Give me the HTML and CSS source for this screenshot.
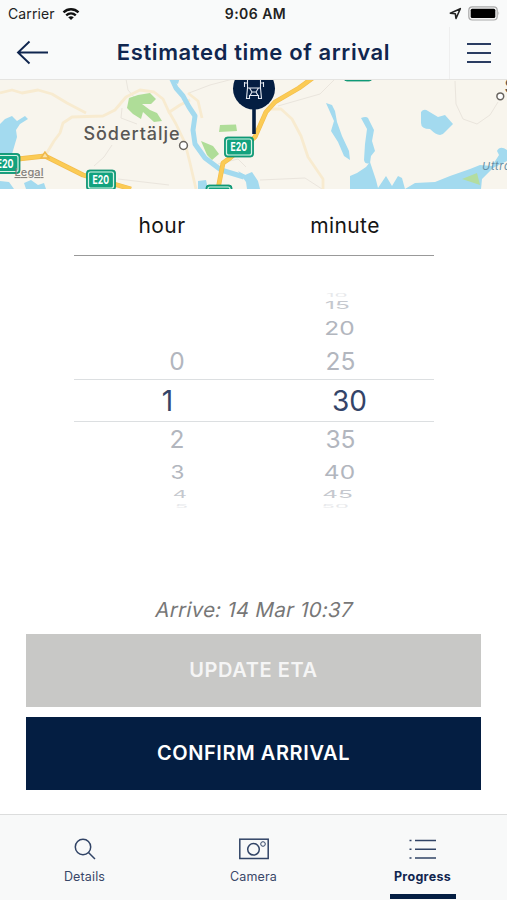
FILE: index.html
```html
<!DOCTYPE html>
<html lang="en">
<head>
<meta charset="utf-8">
<title>Estimated time of arrival</title>
<link rel="stylesheet" href="styles.css">
</head>
<body>
<div class="app">
  <header class="top">
    <div class="status">
      <div class="status-left">
        <span class="carrier">Carrier</span>
        <svg class="wifi" width="18" height="14" viewBox="0 0 18 14">
          <g fill="none" stroke="#111" stroke-width="2.4"><path d="M1.5 5.3C5.8 1.2 12.2 1.2 16.5 5.3"/><path d="M4.2 8.3C7 5.8 11 5.8 13.8 8.3"/></g>
          <path d="M9 13L6.2 10.2Q9 8.2 11.800 10.200Z" fill="#111"/>
        </svg>
      </div>
      <span class="clock">9:06 AM</span>
      <div class="status-right">
        <svg width="13" height="13" viewBox="0 0 13 13"><path d="M1.300 6.200L11.300 1.700L7 11.500L6.300 6.700Z" fill="none" stroke="#222" stroke-width="1.600" stroke-linejoin="round"/></svg>
        <svg width="33" height="15" viewBox="0 0 33 15"><rect x=".8" y=".8" width="28.400" height="13.200" rx="3.500" fill="#f4f4f4" stroke="#aaa" stroke-width="1.200"/><rect x="2.700" y="2.700" width="24.600" height="9.400" rx="1.500"/><path d="M30.500 5.200Q32.300 7.400 30.500 9.600Z" fill="#aaa"/></svg>
      </div>
    </div>
    <div class="nav">
      <div class="back"><svg width="34" height="26" viewBox="0 0 34 26"><path d="M33 12.500H3M14.500 1.500L3 12.500L14.500 23.500" fill="none" stroke="#10264f" stroke-width="1.900"/></svg></div>
      <h1>Estimated time of arrival</h1>
      <div class="menu"><i></i><i></i><i></i></div>
    </div>
  </header>

  <svg class="map" width="507" height="110" viewBox="0 0 507 110">
    <rect width="507" height="110" fill="#f8f5ed"/>
    <g fill="none" stroke="#eae5dd" stroke-width="1">
      <path d="M126 0L128 11L134 18M122 29L121 39L137 45M112 66L104 78L94 87M455 2L456 25L463 40L477 45L490 36L498 23"/>
      <path d="M118 100L169 106M189 14L210 6L233 0M260 101L305 99L322 110M218 85L238 80L246 88M278 27L320 15L335 0"/>
    </g>
    <g fill="none" stroke="#f8ebd0" stroke-width="2.800" stroke-linejoin="round">
      <path d="M0 14L12 11L22 14L38 11L52 15L67 24L86 34"/>
      <path d="M45 77L54 62L60 54L63 44L72 38L103 37L115 31L126 18L140 11L154 13L163 20L168 31L176 45L185 64L190 84L196 110"/>
      <path d="M168 34L180 26L190 21M188 14L198 22L202 39M266 30L281 30L292 40L301 57L308 78L323 100V110"/>
    </g>
    <g fill="#afdd98">
      <path d="M129 19L138 16L150 14L156 20L151 25L142 25L150 31L157 34L162 42L154 43L143 33L141 40L133 35L127 29Z"/>
      <path d="M220 46L236 45.500L237 52L219 53ZM201 62L213 67L219 75L212 81L207 76Z"/>
    </g>
    <g fill="#a3daef">
      <path d="M0 45L5 40L12 37L17 42L25 37L28 40L20 45L16 51L17 58L12 75L10 81H0Z"/>
      <path d="M0 102L9 103L14 110H0ZM24 104L31 101L38 106L44 104L46 110H26Z"/>
      <path d="M326 24L332 26L335 32L337 43L342 57L349 72L350 81L344 77L338 63L331 52L334 42Z"/>
      <path d="M361 39Q366 37 368 39L374 51L372 62L375 72L371 77L370 84Q365 86 364 81L365 65L367 50Z"/>
      <path d="M421 33Q424 29 428 32L438 38L445 36L453 45L445 53Q440 60 430 50Q421 50 421 44Z"/>
      <path d="M350 110L350 97L357 94L366 88L370 83L373 92L376 101L378 109L386 97L392 107L398 97L402 99L405 110L415 104L435 103L450 97L470 90L480 86L492 87L499 76L497 72Q500 66 507 71V82L493 89L482 100L481 110Z"/>
      <path d="M238 92L245 96L252 93L258 102L260 110H247L246 103Z"/>
      <path d="M198 102L206 101L208 110H198Z"/>
    </g>
    <path d="M171 -2L176 9L183 17L189 28L195 37L193 51L195 65L205 79L221 91L244 98" fill="none" stroke="#a3daef" stroke-width="5" stroke-linejoin="round"/>
    <path d="M163 -2H180L178 5Z" fill="#a3daef"/>
    <path d="M462 100L477 94L480 106Z" fill="#b3dda0"/>
    <g fill="none" stroke-linejoin="round">
      <g stroke="#f3bd4c" stroke-width="4.800"><path d="M18 80L45 77L83 96L131 110"/><path d="M314 -2L299 9L275 23L266 33L255 58L230 79L223 84L218 110"/></g>
      <g stroke="#fbcb55" stroke-width="3.500"><path d="M18 80L45 77L83 96L131 110"/><path d="M314 -2L299 9L275 23L266 33L255 58L230 79L223 84L218 110"/></g>
    </g>
    <path d="M45 73L41 79L49 79Z" fill="#fbe3a8" stroke="#efb84a" stroke-width="1.500"/>
    <g fill="#12a27e" stroke="#0b8d6c" stroke-width=".8">
      <rect x="-9" y="74.500" width="29" height="20" rx="3"/><rect x="86.500" y="91" width="29" height="20" rx="3"/><rect x="224.500" y="58" width="29" height="20" rx="3"/><rect x="206" y="106" width="26" height="18" rx="3"/><rect x="344" y="-16" width="28" height="18" rx="3"/>
    </g>
    <g fill="none" stroke="#d9f3e5" stroke-width="1.200">
      <rect x="-7" y="76.500" width="25" height="16" rx="2"/><rect x="88.500" y="93" width="25" height="16" rx="2"/><rect x="226.500" y="60" width="25" height="16" rx="2"/><rect x="208" y="108" width="22" height="14" rx="2"/><rect x="346" y="-16" width="24" height="16" rx="2"/>
    </g>
    <g class="shield"><text x="-3.500" y="88.500" textLength="17" lengthAdjust="spacingAndGlyphs">E20</text><text x="92.500" y="105" textLength="16.500" lengthAdjust="spacingAndGlyphs">E20</text><text x="230.500" y="72" textLength="16.500" lengthAdjust="spacingAndGlyphs">E20</text></g>
    <text class="legal" x="14.500" y="97" textLength="29">Legal</text>
    <text class="city" x="83.500" y="61" textLength="96">Södertälje</text>
    <text class="city" x="504.500" y="14">S</text>
    <text class="water" x="482" y="91">Uttran</text>
    <g fill="#fff" stroke="#68645f" stroke-width="1.500"><circle cx="183.500" cy="66.500" r="3.900"/><circle cx="500.300" cy="17.300" r="3.400"/></g>
    <path d="M254 25V55" stroke="#041e42" stroke-width="3.600"/>
    <circle cx="254" cy="9.500" r="21" fill="#041e42"/>
    <g fill="none" stroke="#e4e9f1" stroke-width="1.100"><path d="M247.500 -2V9H260.500V-2M244.500 3V8M263.500 3V8M244.500 4H247.500M260.500 4H263.500M247.500 9L246.500 19.500H249.500V16.500H258.500V19.500H261.500L260.500 9M249.500 9L252 13H256L258.500 9M250 16.500L252 13M258 16.500L256 13"/></g>
    <path d="M0 .5H507" stroke="#e5e4e1"/>
  </svg>

  <main class="main">
    <div class="labels"><span class="hour-label">hour</span><span class="minute-label">minute</span></div>
    <div class="picker">
      <div class="col hours">
        <div class="row r10"></div><div class="row r15"></div><div class="row r20"></div>
        <div class="row near"><span>0</span></div>
        <div class="row sel"><span>1</span></div>
        <div class="row near"><span>2</span></div>
        <div class="row r40"><span>3</span></div>
        <div class="row r45"><span>4</span></div>
        <div class="row r50"><span>5</span></div>
      </div>
      <div class="col minutes">
        <div class="row r10"><span>10</span></div>
        <div class="row r15"><span>15</span></div>
        <div class="row r20"><span>20</span></div>
        <div class="row near"><span>25</span></div>
        <div class="row sel"><span>30</span></div>
        <div class="row near"><span>35</span></div>
        <div class="row r40"><span>40</span></div>
        <div class="row r45"><span>45</span></div>
        <div class="row r50"><span>50</span></div>
      </div>
    </div>
    <p class="arrive">Arrive: 14 Mar 10:37</p>
    <button class="btn update">UPDATE ETA</button>
    <button class="btn confirm">CONFIRM ARRIVAL</button>
  </main>

  <nav class="tabs">
    <div class="tab">
      <svg width="30" height="24" viewBox="0 0 30 24"><circle cx="13" cy="10" r="7.700"/><path d="M18.500 15.500L25 22"/></svg>
      <span class="t-details">Details</span>
    </div>
    <div class="tab">
      <svg width="30" height="24" viewBox="0 0 30 24"><rect x=".8" y="2.200" width="28.400" height="19.300"/><circle cx="14.500" cy="12.300" r="5.800"/><circle cx="24" cy="7" r="2.300" stroke-width="1"/></svg>
      <span class="t-camera">Camera</span>
    </div>
    <div class="tab active">
      <svg width="30" height="24" viewBox="0 0 30 24"><path d="M7 3.500H28M7 12.300H28M7 21H28M1.500 3.500H3.500M1.500 12.300H3.500M1.500 21H3.500"/></svg>
      <span class="t-progress">Progress</span>
    </div>
  </nav>
</div>
</body>
</html>
```
FILE: styles.css
```css
* { box-sizing: border-box; }
body { margin: 0; background: #fff; font-family: Inter, "Liberation Sans", sans-serif; color: #10264f; }
.app { width: 507px; height: 900px; display: flex; flex-direction: column; overflow: hidden; }
.top { height: 79px; background: #f9fafa; flex: none; }
.status { height: 27px; display: grid; grid-template-columns: 1fr auto 1fr; align-items: center; padding: 0 6px 0 8px; font-size: 13px; color: #222; }
.status-left { display: flex; align-items: center; gap: 7px; }
.carrier { font-size: 14px; letter-spacing: .1px; }
.clock { font-size: 14px; font-weight: 600; letter-spacing: .45px; transform: translateX(1px); }
.status-right { display: flex; justify-content: flex-end; align-items: center; gap: 6px; }
.nav { height: 52px; display: grid; grid-template-columns: 58px 1fr 58px; align-items: center; }
.back { padding-left: 15px; height: 26px; }
h1 { margin: 0; font-size: 22px; font-weight: 600; text-align: center; letter-spacing: .62px; white-space: nowrap; line-height: 50px; height: 52px; }
.menu { height: 52px; border-left: 1px solid #efefef; display: flex; flex-direction: column; justify-content: center; gap: 7px; padding-left: 17px; }
.menu i { width: 24px; height: 2px; background: #2b3d62; }
.map { display: block; flex: none; }
.shield { fill: #fff; font: 700 11.5px Inter, sans-serif; }
.legal { fill: #85827d; font: 500 11px Inter, sans-serif; text-decoration: underline; }
.city { fill: #595754; font: 500 18px Inter, sans-serif; }
.water { fill: #668fa5; font: italic 11px Inter, sans-serif; letter-spacing: .7px; }
.main { height: 625px; flex: none; display: flex; flex-direction: column; padding: 0 26px; }
.labels { height: 67px; margin: 0 47px 0 48px; border-bottom: 1px solid #999; display: grid; grid-template-columns: 176px 190px; color: #151515; font-size: 21px; line-height: 73px; text-align: center; letter-spacing: .4px; }
.picker { height: 218px; margin: 36px 47px 0 48px; display: grid; grid-template-columns: 1fr 1fr; color: #b2b6be; }
.row { display: flex; align-items: center; justify-content: center; font-size: 24.5px; line-height: 1; white-space: nowrap; }
.row span { display: block; }
.r10 { height: 6px; overflow: hidden; opacity: .3; }
.r10 span { transform: translateX(-4px) scale(.85, .22); }
.r15 { height: 14px; opacity: .75; }
.r15 span { transform: translateX(-3px) scale(1, .44); }
.r20 { height: 32px; }
.r20 span { transform: translateX(-1px) scale(1, .74); }
.near { height: 35px; }
.sel { height: 43px; border-top: 1px solid #dcdfe1; border-bottom: 1px solid #dcdfe1; color: #344468; font-size: 28px; }
.r40 { height: 30px; }
.r40 span { transform: translateX(-1px) scale(1, .74); }
.r45 { height: 17px; opacity: .75; }
.r45 span { transform: translate(-3px, -1px) scale(1, .44); }
.r50 { height: 6px; overflow: hidden; opacity: .3; }
.r50 span { transform: translate(-5px, -1px) scale(.9, .22); }
.hours .row { padding-left: 26px; }
.hours .sel { padding-left: 7px; }
.hours .r40 span { transform: translateX(1px) scale(.92, .74); }
.hours .r45 span { transform: translate(3px, -1px) scale(.9, .44); }
.hours .r50 span { transform: translate(4px, -1px) scale(.9, .22); }
.minutes .row { padding-right: 7px; }
.minutes .sel { padding-left: 11px; padding-right: 0; }
.arrive { margin: 85px 0 0; height: 39px; line-height: 29px; text-align: center; font-size: 20.5px; letter-spacing: .25px; color: #777; transform: skewX(-12deg); }
.btn { height: 73px; flex: none; border: 0; padding: 0; font: 600 20px Inter, sans-serif; color: #fff; letter-spacing: .6px; line-height: 71px; }
.update { background: #c8c8c6; color: #f5f5f5; }
.confirm { background: #041e42; margin-top: 10px; }
.tabs { height: 86px; flex: none; background: #f8f9f9; border-top: 1px solid #dcdddd; display: grid; grid-template-columns: repeat(3, 169px); }
.tab { display: flex; flex-direction: column; align-items: center; padding-top: 22px; font-size: 12.5px; line-height: 16px; gap: 8px; color: #384768; letter-spacing: .15px; }
.tab svg { fill: none; stroke: #314466; stroke-width: 1.5; display: block; }
.tab.active { color: #10264f; font-weight: 700; letter-spacing: .3px; }
.active::after { content: ""; width: 66px; height: 5px; background: #041e42; margin-top: 1px; }
```
